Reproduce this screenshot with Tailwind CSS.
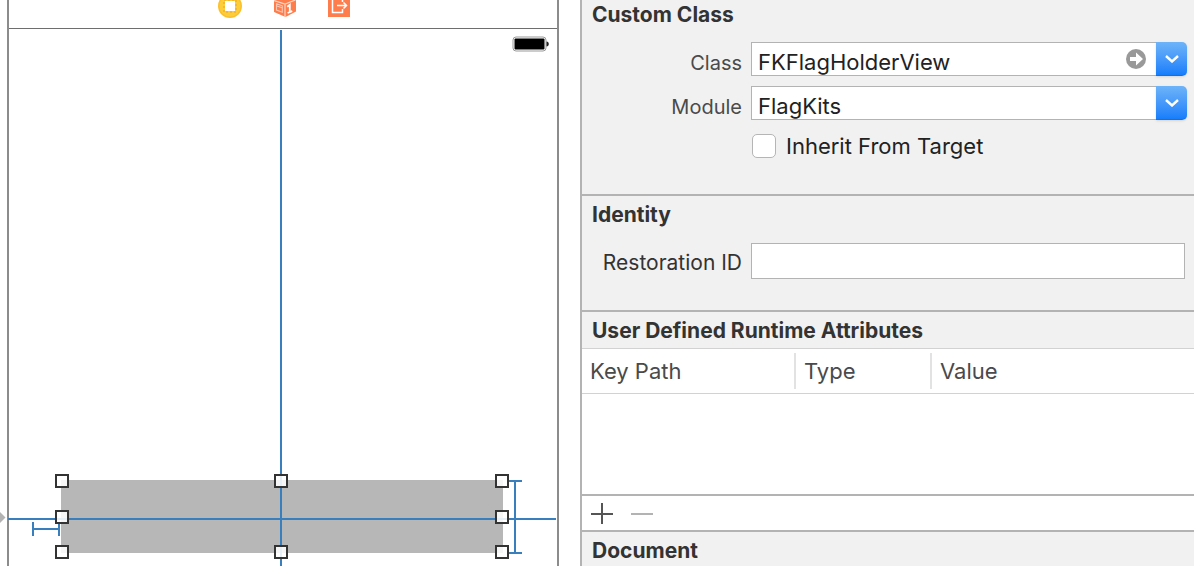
<!DOCTYPE html>
<html lang="en">
<head>
<meta charset="utf-8">
<title>Identity Inspector</title>
<script src="https://cdn.jsdelivr.net/npm/@tailwindcss/browser@4"></script>
</head>
<body class="bg-white font-['Inter',sans-serif] text-[#333] overflow-hidden">
<div class="flex h-screen overflow-hidden">

  <!-- Storyboard canvas -->
  <main class="relative w-[580px] shrink-0 overflow-hidden bg-white">
    <div class="ml-[7px] mr-[21px] h-full flex flex-col border-x-2 border-[#8c8c8c]">
      <div class="h-[29px] flex items-start justify-center gap-8 overflow-hidden border-b border-[#6e6e6e] pl-[2px]">
        <svg class="w-6 h-[18px]" viewBox="0 0 24 18" role="img" aria-label="View Controller">
          <circle cx="12" cy="6" r="12" fill="#fbc02b"/>
          <circle cx="12" cy="6" r="10.500" fill="#fccd3a"/>
          <rect x="6" y="0" width="12" height="12" fill="none" stroke="#f0a020" stroke-width="1" stroke-dasharray="2 2"/>
          <rect x="7" y="1" width="10" height="10" fill="#fff"/>
        </svg>
        <svg class="w-[22px] h-[18px]" viewBox="0 0 22 18" role="img" aria-label="First Responder">
          <path d="M0 0h22v11.500L11.500 17 0 12z" fill="#fd7d4d"/>
          <path d="M0 0.500l11 3.500L21.500 0M11 4v13" fill="none" stroke="#ffd3c2" stroke-width="1.200"/>
          <path d="M2.500 3.800l5.800 2v6.400l-5.800-2.200zM3 6l5 1.800" fill="none" stroke="#ffc4ae" stroke-width="1.100"/>
          <path d="M13.300 6.800l2.500-2v7.200M13.600 13l4.700-1.800" fill="none" stroke="#fff" stroke-width="1.800"/>
        </svg>
        <svg class="w-[22px] h-[18px]" viewBox="0 0 22 18" role="img" aria-label="Exit">
          <path d="M0 0h22v17H0z" fill="#fd7d4d"/>
          <path d="M14.500 2V0M14.500 9v3.500h-10V0M9 5.500h9M15.500 2.500l3 3-3 3" fill="none" stroke="#fff" stroke-width="1.500"/>
        </svg>
      </div>
      <div class="flex justify-end pt-[7px] pr-2">
        <svg class="w-[37px] h-4" viewBox="0 0 37 16" role="img" aria-label="Battery">
          <rect x="1" y="1" width="33" height="14" rx="3" fill="#fff" stroke="#999"/>
          <rect x="2.500" y="2.500" width="30" height="11" rx="1" fill="#000"/>
          <path d="M34.500 5.500c3 0 3 5 0 5z" fill="#222"/>
        </svg>
      </div>
    </div>

    <!-- Selected view, its constraints and resize handles -->
    <svg class="absolute left-0 top-0 w-[580px] h-[566px]" viewBox="0 0 580 566" role="img" aria-label="Selected view with constraints">
      <path d="M0 512l5.500 5.500L0 523z" fill="#b3b3b3"/>
      <rect x="61" y="480" width="442" height="73" fill="#b7b7b7"/>
      <g fill="none" stroke="#3a7fbd" stroke-width="2">
        <path d="M281 30v536M8 519h548"/>
        <path d="M33 522v14M59 522v14M33 529h26"/>
        <path d="M509 481h13M509 553h13M515 481v72"/>
      </g>
      <g fill="#fff" fill-opacity=".88" stroke="#333" stroke-width="2">
        <rect x="56" y="475" width="12" height="12"/>
        <rect x="275" y="475" width="12" height="12"/>
        <rect x="496" y="475" width="12" height="12"/>
        <rect x="56" y="511" width="12" height="12"/>
        <rect x="496" y="511" width="12" height="12"/>
        <rect x="56" y="546" width="12" height="12"/>
        <rect x="275" y="546" width="12" height="12"/>
        <rect x="496" y="546" width="12" height="12"/>
      </g>
    </svg>
  </main>

  <!-- Identity inspector -->
  <aside class="flex-1 min-w-0 border-l-2 border-[#b3b3b3] bg-[#f1f1f1]">
    <section class="border-b-2 border-[#b3b3b3] pb-9">
      <h2 class="pl-[10px] text-[21px] leading-[30px] font-bold">Custom Class</h2>
      <div class="mt-3 flex flex-col gap-[10px] pr-[7px]">
        <div class="flex items-center gap-[9px]">
          <label for="class" class="w-40 shrink-0 pt-2 text-right text-[20px] leading-[26px] text-[#4a4a4a]">Class</label>
          <div class="flex flex-1 min-w-0 h-[34px]">
            <div class="flex flex-1 min-w-0 items-center border border-r-0 border-[#b3b3b3] bg-white pr-[10px]">
              <input id="class" type="text" value="FKFlagHolderView" class="flex-1 min-w-0 h-8 pt-[6px] pl-[6px] text-[22px] leading-[26px] text-[#222] outline-none">
              <button type="button" aria-label="Jump to class" class="size-5">
                <svg class="size-5" viewBox="0 0 20 20"><circle cx="10" cy="10" r="10" fill="#999"/><path d="M4 8h6V3.500L17 10l-7 6.500V12H4z" fill="#fff"/></svg>
              </button>
            </div>
            <button type="button" aria-label="Show classes" class="w-[31px] flex items-center justify-center rounded-r-[5px] border-b border-[#0f6ef5] bg-linear-to-b from-[#6db3f8] to-[#157efb] shadow-sm">
              <svg class="w-[14px] h-2" viewBox="0 0 14 8"><path d="M1 1l6 5.500L13 1" fill="none" stroke="#fff" stroke-width="2.400"/></svg>
            </button>
          </div>
        </div>
        <div class="flex items-center gap-[9px]">
          <label for="module" class="w-40 shrink-0 pt-2 text-right text-[20px] leading-[26px] text-[#4a4a4a]">Module</label>
          <div class="flex flex-1 min-w-0 h-[34px]">
            <div class="flex flex-1 min-w-0 items-center border border-r-0 border-[#b3b3b3] bg-white">
              <input id="module" type="text" value="FlagKits" class="flex-1 min-w-0 h-8 pt-[6px] pl-[6px] text-[22px] leading-[26px] text-[#222] outline-none">
            </div>
            <button type="button" aria-label="Show modules" class="w-[31px] flex items-center justify-center rounded-r-[5px] border-b border-[#0f6ef5] bg-linear-to-b from-[#6db3f8] to-[#157efb] shadow-sm">
              <svg class="w-[14px] h-2" viewBox="0 0 14 8"><path d="M1 1l6 5.500L13 1" fill="none" stroke="#fff" stroke-width="2.400"/></svg>
            </button>
          </div>
        </div>
      </div>
      <div class="mt-[14px] pl-[170px] flex items-center gap-[10px]">
        <input id="inherit" type="checkbox" class="appearance-none size-6 shrink-0 rounded-[5px] border border-[#b5b5b5] bg-white checked:bg-[#157efb]">
        <label for="inherit" class="text-[22px] leading-6 text-[#222]">Inherit From Target</label>
      </div>
    </section>

    <section class="border-b-2 border-[#b3b3b3] pt-1 pb-[31px]">
      <h2 class="pl-[10px] text-[21px] leading-[30px] font-bold">Identity</h2>
      <div class="mt-[13px] flex items-center gap-[9px] pr-[9px]">
        <label for="restoration" class="w-40 shrink-0 pt-1 text-right text-[21px] leading-[26px] text-[#333]">Restoration ID</label>
        <input id="restoration" type="text" class="flex-1 min-w-0 h-9 border border-[#b3b3b3] bg-white px-[6px] text-[22px] outline-none">
      </div>
    </section>

    <section class="border-b-2 border-[#b3b3b3]">
      <h2 class="pl-[10px] pt-1 pb-[2px] text-[21px] leading-[30px] font-bold">User Defined Runtime Attributes</h2>
      <div class="h-[148px] border-y border-t-[#d2d2d2] border-b-2 border-b-[#b3b3b3] bg-white">
        <table class="w-full table-fixed border-collapse text-left text-[22px] leading-9 text-[#4a4a4a]">
          <thead>
            <tr class="h-11 border-b border-[#d2d2d2]">
              <th scope="col" class="w-[214px] p-0 font-normal"><div class="border-r-2 border-[#e2e2e2] pl-2">Key Path</div></th>
              <th scope="col" class="w-[136px] p-0 font-normal"><div class="border-r-2 border-[#e2e2e2] pl-2">Type</div></th>
              <th scope="col" class="p-0 pl-2 font-normal">Value</th>
            </tr>
          </thead>
        </table>
      </div>
      <div class="flex h-[34px] items-center gap-[18px] bg-white pl-[9px]">
        <button type="button" aria-label="Add attribute"><svg class="block size-[22px]" viewBox="0 0 22 22"><path d="M0 12h22M11 1v21" stroke="#555" stroke-width="2"/></svg></button>
        <button type="button" aria-label="Remove attribute" disabled><svg class="block size-[22px]" viewBox="0 0 22 22"><path d="M0 12h22" stroke="#b3b3b3" stroke-width="2"/></svg></button>
      </div>
    </section>

    <section class="pt-1">
      <h2 class="pl-[10px] text-[21px] leading-[30px] font-bold">Document</h2>
    </section>
  </aside>
</div>
</body>
</html>
